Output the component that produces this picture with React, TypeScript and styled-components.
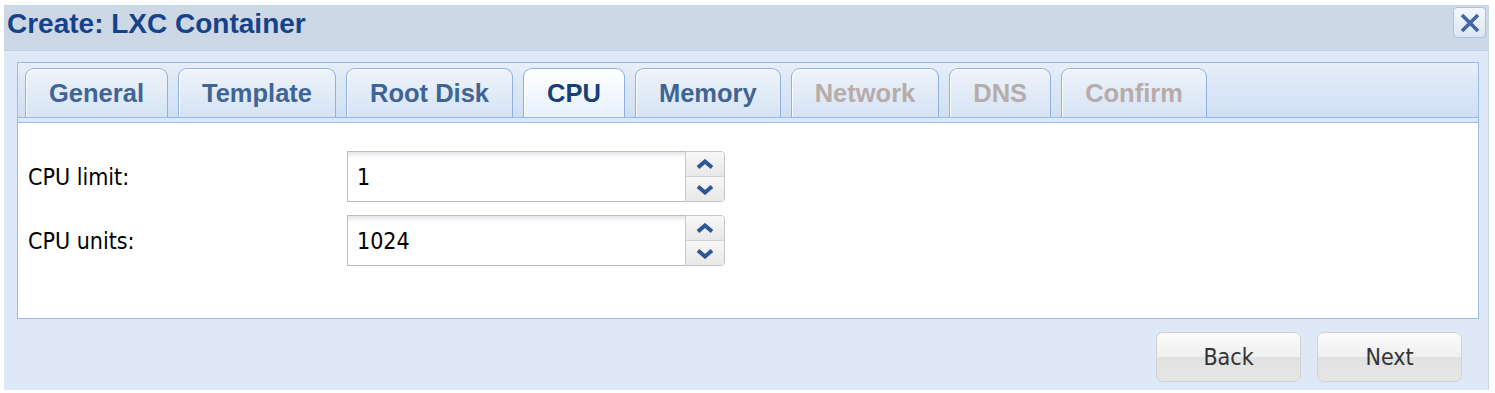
import React from 'react'
import styled, { createGlobalStyle } from 'styled-components'

const GlobalStyle = createGlobalStyle`
  html, body {
    margin: 0;
    padding: 0;
    background: #ffffff;
  }
`

const Window = styled.div`
  margin: 5px 6px 0 4px;
  width: 1485px;
  height: 385px;
  background: #dfe8f6;
  display: flex;
  flex-direction: column;
  box-sizing: border-box;
  border-right: 1px solid #c9d8ec;
`

const Header = styled.div`
  height: 46px;
  background: #ccd8e6;
  border-bottom: 1px solid #bfd0e6;
  box-sizing: border-box;
  display: flex;
  align-items: center;
  justify-content: space-between;
  padding: 0 3px 8px 3px;
`

const Title = styled.div`
  font-family: 'Liberation Sans', Arial, sans-serif;
  font-weight: bold;
  font-size: 28px;
  color: #15428b;
`

const CloseButton = styled.button`
  align-self: flex-start;
  margin: 2px -1px 0 0;
  width: 33px;
  height: 31px;
  padding: 0;
  border: 1px solid #a9c1e3;
  border-radius: 4px;
  background: linear-gradient(#f4f7fc, #dce6f3);
  display: flex;
  align-items: center;
  justify-content: center;
`

const Body = styled.div`
  flex: 1;
  display: flex;
  flex-direction: column;
  padding: 11px 9px 0 13px;
`

const TabPanel = styled.div`
  display: flex;
  flex-direction: column;
`

const TabStrip = styled.div`
  height: 55px;
  box-sizing: border-box;
  border: 1px solid #99bbe8;
  border-bottom: none;
  background: linear-gradient(#e6eef8, #cfdff3);
  display: flex;
  align-items: flex-end;
  padding: 0 0 0 7px;
  gap: 10px;
`

const StripBand = styled.div`
  height: 5px;
  background: #dbe7f8;
  border: 1px solid #99bbe8;
  border-bottom: none;
  box-sizing: border-box;
`

const Tab = styled.div<{ $active?: boolean; $disabled?: boolean }>`
  height: 49px;
  box-sizing: border-box;
  padding: 0 23px;
  border: 1px solid #8fb1df;
  border-bottom: none;
  border-radius: 9px 9px 0 0;
  background: ${({ $active }) =>
    $active
      ? 'linear-gradient(#ffffff, #e6f0fd)'
      : 'linear-gradient(#eef3fa, #d6e3f4)'};
  display: flex;
  align-items: center;
  font-family: 'Liberation Sans', Arial, sans-serif;
  font-weight: bold;
  font-size: 25.5px;
  color: ${({ $active, $disabled }) =>
    $disabled ? '#b7abab' : $active ? '#183f78' : '#3f6595'};
  box-shadow: inset 1px 1px 0 rgba(255, 255, 255, 0.8);
`

const Content = styled.div`
  height: 197px;
  box-sizing: border-box;
  background: #ffffff;
  border: 1px solid #99bbe8;
  padding: 28px 0 0 10px;
  display: flex;
  flex-direction: column;
  gap: 13px;
`

const FieldRow = styled.div`
  display: flex;
  align-items: center;
`

const Label = styled.div`
  width: 319px;
  font-family: 'DejaVu Sans Condensed', 'DejaVu Sans', sans-serif;
  font-stretch: condensed;
  font-size: 23px;
  color: #000000;
`

const Spinner = styled.div`
  display: flex;
  height: 51px;
`

const Input = styled.div`
  width: 338px;
  box-sizing: border-box;
  border: 1px solid #b9bcc6;
  border-right: none;
  background: linear-gradient(#e6e6e6 0, #ffffff 6px);
  display: flex;
  align-items: center;
  padding-left: 9px;
  font-family: 'DejaVu Sans Condensed', 'DejaVu Sans', sans-serif;
  font-stretch: condensed;
  font-size: 23px;
  color: #000000;
`

const Trigger = styled.div`
  width: 40px;
  display: flex;
  flex-direction: column;
  box-sizing: border-box;
  border: 1px solid #c3c6ce;
  border-radius: 0 4px 4px 0;
  overflow: hidden;
`

const TriggerHalf = styled.div<{ $down?: boolean }>`
  flex: 1;
  display: flex;
  align-items: center;
  justify-content: center;
  background: linear-gradient(#f7f7f7, #e8e8e8);
  border-top: ${({ $down }) => ($down ? '1px solid #cfd1d6' : 'none')};
`

const Footer = styled.div`
  display: flex;
  justify-content: flex-end;
  gap: 16px;
  padding: 13px 17px 0 0;
`

const Button = styled.button`
  width: 145px;
  height: 50px;
  border: 1px solid #d2d2d2;
  border-radius: 7px;
  background: linear-gradient(#fbfbfb 0%, #f0f0f0 50%, #e1e1e1 51%, #e6e6e6 100%);
  font-family: 'DejaVu Sans Condensed', 'DejaVu Sans', sans-serif;
  font-stretch: condensed;
  font-size: 23px;
  color: #333333;
  padding: 0;
`

const Chevron = ({ down }: { down?: boolean }) => (
  <svg width="18" height="11" viewBox="0 0 18 11">
    <path
      d={down ? 'M2 2.5 L9 8.5 L16 2.5' : 'M2 8.5 L9 2.5 L16 8.5'}
      fill="none"
      stroke="#2b5797"
      strokeWidth="4"
      strokeLinejoin="miter"
    />
  </svg>
)

const tabs = [
  { name: 'General' },
  { name: 'Template' },
  { name: 'Root Disk' },
  { name: 'CPU', active: true },
  { name: 'Memory' },
  { name: 'Network', disabled: true },
  { name: 'DNS', disabled: true },
  { name: 'Confirm', disabled: true },
]

const fields = [
  { label: 'CPU limit:', value: '1' },
  { label: 'CPU units:', value: '1024' },
]

const App = () => {
  return (
    <>
      <GlobalStyle />
      <Window>
        <Header>
          <Title>Create: LXC Container</Title>
          <CloseButton>
            <svg width="22" height="20" viewBox="0 0 22 20">
              <path d="M3 2 L19 18 M19 2 L3 18" stroke="#4166a3" strokeWidth="3.6" />
            </svg>
          </CloseButton>
        </Header>
        <Body>
          <TabPanel>
            <TabStrip>
              {tabs.map((t) => (
                <Tab key={t.name} $active={t.active} $disabled={t.disabled}>
                  {t.name}
                </Tab>
              ))}
            </TabStrip>
            <StripBand />
            <Content>
              {fields.map((f) => (
                <FieldRow key={f.label}>
                  <Label>{f.label}</Label>
                  <Spinner>
                    <Input>{f.value}</Input>
                    <Trigger>
                      <TriggerHalf>
                        <Chevron />
                      </TriggerHalf>
                      <TriggerHalf $down>
                        <Chevron down />
                      </TriggerHalf>
                    </Trigger>
                  </Spinner>
                </FieldRow>
              ))}
            </Content>
          </TabPanel>
          <Footer>
            <Button>Back</Button>
            <Button>Next</Button>
          </Footer>
        </Body>
      </Window>
    </>
  )
}

export default App
